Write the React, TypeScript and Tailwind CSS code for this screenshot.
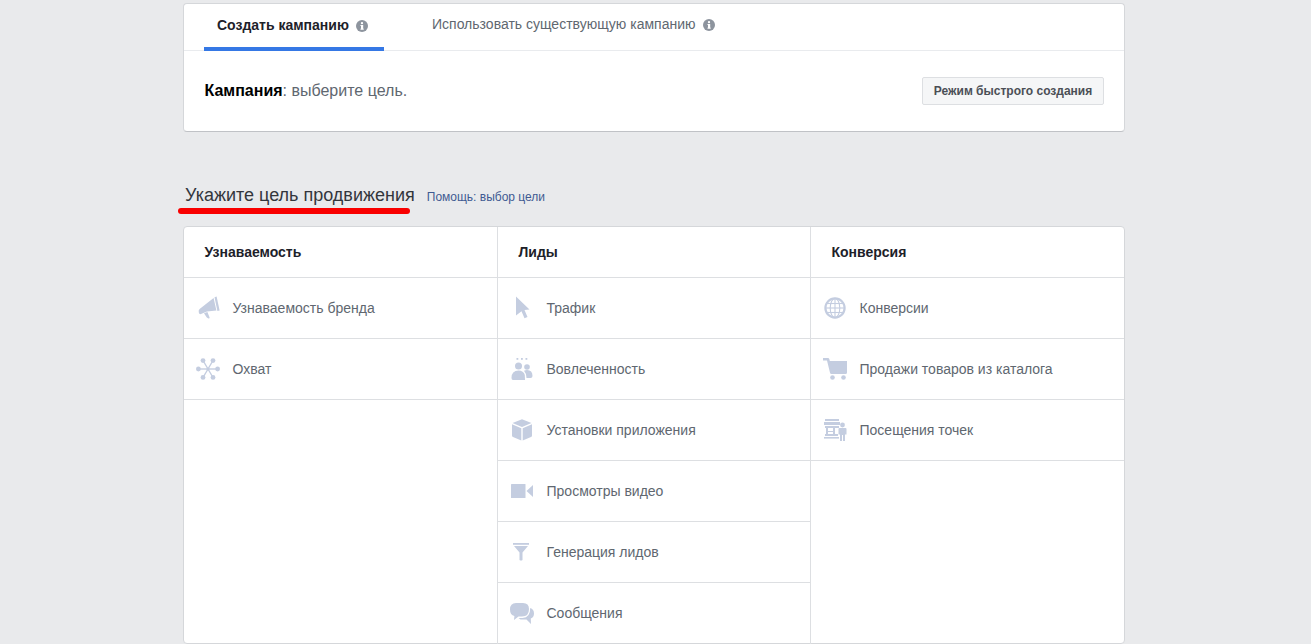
import React from "react";

const C = "#c4cde0";

const Info = () => (
  <svg width="12" height="12" viewBox="0 0 12 12" className="shrink-0">
    <circle cx="6" cy="6" r="6" fill="#8d949e" />
    <rect x="5" y="5" width="2.2" height="4.4" fill="#fff" />
    <rect x="4.4" y="5" width="2" height="0.9" fill="#fff" />
    <rect x="4.4" y="8.7" width="3.4" height="0.9" fill="#fff" />
    <circle cx="6" cy="3.2" r="1.15" fill="#fff" />
  </svg>
);

const Megaphone = () => (
  <svg width="22" height="24" viewBox="0 0 22 24">
    <path d="M16.5 1.2 L18.6 0.4 L21.6 14.6 L19.4 15 Z" fill={C} />
    <path d="M15.6 2 L18.4 14.6 L9 15.6 L3 18 Q1.2 18.6 0.8 16.6 Q0.2 14.4 1.6 13 Z" fill={C} />
    <path d="M6 17.2 L9.4 16 L11.6 21.4 Q11.8 22.6 10.4 22.4 L8.8 21.6 Z" fill={C} />
  </svg>
);
const Reach = () => (
  <svg width="24" height="22" viewBox="0 0 24 22">
    <g stroke={C} strokeWidth="1.4">
      <line x1="12" y1="11" x2="7" y2="2.5" />
      <line x1="12" y1="11" x2="17" y2="2.5" />
      <line x1="12" y1="11" x2="7" y2="19.5" />
      <line x1="12" y1="11" x2="17" y2="19.5" />
      <line x1="2" y1="11" x2="22" y2="11" />
    </g>
    <g fill={C}>
      <circle cx="7" cy="2.6" r="2.4" />
      <circle cx="17" cy="2.6" r="2.4" />
      <circle cx="7" cy="19.4" r="2.4" />
      <circle cx="17" cy="19.4" r="2.4" />
      <circle cx="2.4" cy="11" r="2.4" />
      <circle cx="21.6" cy="11" r="2.4" />
      <circle cx="12" cy="11" r="1.6" />
    </g>
  </svg>
);
const Cursor = () => (
  <svg width="16" height="24" viewBox="0 0 16 24">
    <path d="M1 0.5 L14.5 13.5 L9.5 14 L12.5 21 L9.5 22.3 L6.5 15.3 L1 19.5 Z" fill={C} />
  </svg>
);
const People = () => (
  <svg width="22" height="23" viewBox="0 0 22 23">
    <g fill={C}>
      <rect x="5.5" y="0" width="1.8" height="1.8" />
      <rect x="10" y="0" width="1.8" height="1.8" />
      <rect x="14.5" y="0" width="1.8" height="1.8" />
      <circle cx="7.5" cy="8" r="3.5" />
      <circle cx="16" cy="9" r="2.8" />
      <path d="M0.5 20 Q0.5 12.5 7.5 12.5 Q12.5 12.5 13.8 17 L14 22 L2 22 Q0.5 22 0.5 20 Z" />
      <path d="M13 12.8 Q14.5 12 16 12 Q21.5 12 21.5 18 Q21.5 20 19.5 20 L15.5 20 Q15.5 15.5 13 12.8 Z" />
    </g>
  </svg>
);
const Box = () => (
  <svg width="20" height="22" viewBox="0 0 20 22">
    <g fill={C}>
      <path d="M10 0.3 L19.5 4 L10 8 L0.5 4 Z" />
      <path d="M0 5.2 L9.3 9.2 L9.3 21.5 L1 18 Q0 17.6 0 16.5 Z" />
      <path d="M20 5.2 L10.7 9.2 L10.7 21.5 L19 18 Q20 17.6 20 16.5 Z" />
    </g>
  </svg>
);
const Video = () => (
  <svg width="22" height="14" viewBox="0 0 22 14">
    <rect x="0" y="0" width="14.5" height="14" rx="0.5" fill={C} />
    <path d="M15.5 7 L22 1 L22 13 Z" fill={C} />
  </svg>
);
const Funnel = () => (
  <svg width="16" height="18" viewBox="0 0 16 18">
    <rect x="0" y="0" width="16" height="1.8" fill={C} />
    <path d="M1 3 L15 3 L9.5 9.5 L9.5 17 Q8 18 6.5 17 L6.5 9.5 Z" fill={C} />
  </svg>
);
const Chat = () => (
  <svg width="24" height="22" viewBox="0 0 24 22">
    <path d="M6 0 H13 Q19 0 19 6 Q19 13.5 12 13.5 H8.5 L4 17 L4.4 13 Q0 12 0 6.5 Q0 0 6 0 Z" fill={C} />
    <path d="M20.2 5 Q24 6 24 10.5 Q24 14.5 20.8 15.5 L21 21 L16.5 16.5 H10.5 L8.5 15 H12.5 Q20.4 14.5 20.2 5 Z" fill={C} />
  </svg>
);
const Globe = () => (
  <svg width="22" height="22" viewBox="0 0 22 22">
    <circle cx="11" cy="11" r="9.6" fill="none" stroke={C} strokeWidth="2.2" />
    <g fill="none" stroke={C} strokeWidth="1.1">
      <ellipse cx="11" cy="11" rx="4.8" ry="9.6" />
      <line x1="11" y1="1" x2="11" y2="21" />
      <line x1="1" y1="11" x2="21" y2="11" />
      <line x1="2.5" y1="6.5" x2="19.5" y2="6.5" />
      <line x1="2.5" y1="15.5" x2="19.5" y2="15.5" />
    </g>
  </svg>
);
const Cart = () => (
  <svg width="24" height="22" viewBox="0 0 24 22">
    <g fill={C}>
      <path d="M0 0 H5 Q6 0 6.3 1 L6.8 3 H24 V14.5 Q24 16 22.5 16 H8.5 Q7.2 16 7 14.8 L4 2.5 H0 Z" />
      <circle cx="9.5" cy="19.5" r="2.3" />
      <circle cx="20.5" cy="19.5" r="2.3" />
    </g>
  </svg>
);
const Store = () => (
  <svg width="23" height="22" viewBox="0 0 23 22">
    <g fill={C}>
      <rect x="1" y="0" width="14" height="2" />
      <rect x="0" y="3" width="16" height="3" />
      <path d="M1 7 H15 V9 H11 V15 H14 V17 H1 V15 H2 V9 H1 Z M4 9 V12 H9 V9 Z M4 13 V15 H9 V13 Z" fillRule="evenodd" />
      <rect x="0" y="18" width="15" height="1.6" />
      <circle cx="18.5" cy="6" r="2.4" />
      <path d="M15.5 9 H21.5 Q22.5 9 22.5 10 V15.5 H21 V22 H19 V16 H18 V22 H16 V15.5 H14.5 V10 Q14.5 9 15.5 9 Z" />
    </g>
  </svg>
);

type Row = { icon: React.ReactNode; label: string; iconBox: string };

const columns: { title: string; rows: Row[] }[] = [
  {
    title: "Узнаваемость",
    rows: [
      { icon: <Megaphone />, label: "Узнаваемость бренда", iconBox: "w-[28px] pl-[2px]" },
      { icon: <Reach />, label: "Охват", iconBox: "w-[28px]" },
    ],
  },
  {
    title: "Лиды",
    rows: [
      { icon: <Cursor />, label: "Трафик", iconBox: "w-[28px] pl-[5px]" },
      { icon: <People />, label: "Вовлеченность", iconBox: "w-[28px] pl-[1px]" },
      { icon: <Box />, label: "Установки приложения", iconBox: "w-[28px] pl-[2px]" },
      { icon: <Video />, label: "Просмотры видео", iconBox: "w-[28px] pl-[1px]" },
      { icon: <Funnel />, label: "Генерация лидов", iconBox: "w-[28px] pl-[3px]" },
      { icon: <Chat />, label: "Сообщения", iconBox: "w-[28px]" },
    ],
  },
  {
    title: "Конверсия",
    rows: [
      { icon: <Globe />, label: "Конверсии", iconBox: "w-[28px] pl-[1px]" },
      { icon: <Cart />, label: "Продажи товаров из каталога", iconBox: "w-[28px]" },
      { icon: <Store />, label: "Посещения точек", iconBox: "w-[28px] pl-[1px]" },
    ],
  },
];

export default function App() {
  return (
    <div className="h-[644px] overflow-hidden bg-[#e9eaec] pt-[3px] font-['Liberation_Sans',Arial,sans-serif]">
      <div className="ml-[183px] w-[942px]">
        {/* top card */}
        <div className="h-[129px] rounded-[4px] border border-[#d5d7da] border-b-[#c0c2c6] bg-white">
          <div className="flex h-[47px] border-b border-[#e9ebee] pl-[20px]">
            <div className="flex h-[47px] w-[180px] items-center gap-[7px] border-b-4 border-[#3578e5] pl-[13px] text-[14px] font-bold text-[#1d2129]">
              <span>Создать кампанию</span>
              <Info />
            </div>
            <div className="ml-[48px] flex h-[44px] items-center gap-[7px] pb-[3px] text-[14px] text-[#606770]">
              <span>Использовать существующую кампанию</span>
              <Info />
            </div>
          </div>
          <div className="flex h-[80px] items-center justify-between pl-[20.5px] pr-[20px]">
            <div className="text-[16px] text-[#606770]">
              <span className="font-bold text-[#000]">Кампания</span>: выберите цель.
            </div>
            <div className="flex h-[28px] w-[182px] items-center justify-center rounded-[2px] border border-[#dddfe2] bg-[#f5f6f7] text-[12px] font-bold text-[#4b4f56]">
              Режим быстрого создания
            </div>
          </div>
        </div>

        {/* heading */}
        <div className="relative flex h-[94px] items-start pl-[2px] pt-[51px]">
          <span className="text-[18px] leading-[24px] text-[#33363c]">Укажите цель продвижения</span>
          <span className="ml-[12px] mt-[6px] text-[12px] leading-[16px] text-[#3f5a92]">Помощь: выбор цели</span>
          <div className="absolute left-[-5px] top-[76px] h-[6px] w-[232px] rounded-full bg-[#f90000]" />
        </div>

        {/* objectives grid */}
        <div className="grid h-[418px] grid-cols-[314px_313px_1fr] rounded-[4px] border border-[#d5d7da] bg-white">
          {columns.map((col, i) => (
            <div key={col.title} className={i < 2 ? "border-r border-[#dddfe2]" : ""}>
              <div className="flex h-[51px] items-center border-b border-[#dddfe2] pl-[20.5px] text-[14px] font-bold text-[#1d2129]">
                {col.title}
              </div>
              {col.rows.map((r, j) => (
                <div
                  key={r.label}
                  className={
                    "flex h-[61px] items-center pl-[12px] " +
                    (j === col.rows.length - 1 && i === 1 ? "" : "border-b border-[#dddfe2]")
                  }
                >
                  <div className={"mr-[8.5px] flex shrink-0 items-center " + r.iconBox}>{r.icon}</div>
                  <span className="text-[14px] text-[#606770]">{r.label}</span>
                </div>
              ))}
            </div>
          ))}
        </div>
      </div>
    </div>
  );
}
